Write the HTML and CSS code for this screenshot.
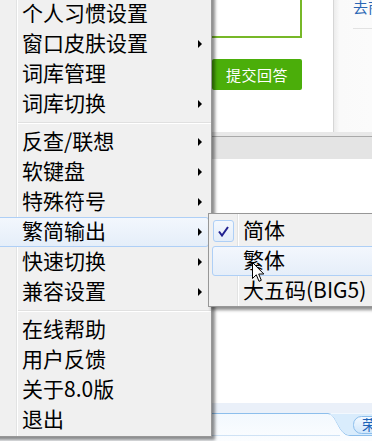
FILE: index.html
```html
<!DOCTYPE html>
<html lang="zh-CN">
<head>
  <meta charset="UTF-8">
  <meta name="viewport" content="width=device-width, initial-scale=1.0">
  <title>输入法菜单</title>
  <link rel="stylesheet" href="styles.css">
</head>
<body>
  <div class="page">
    <!-- page under the menu -->
    <div class="top">
      <div class="main">
        <div class="answer-box"></div>
        <button class="submit">提交回答</button>
      </div>
      <div class="side">
        <a class="side-link">去商城</a>
        <div class="side-rule"></div>
      </div>
    </div>
    <div class="toolbar"></div>
    <div class="content"></div>
    <div class="tabs">
      <svg width="372" height="38" viewBox="0 0 372 38">
        <defs>
          <linearGradient id="pale" x1="0" y1="0" x2="0" y2="1">
            <stop offset="0" stop-color="#f2f8fe"/>
            <stop offset="1" stop-color="#fbfdff"/>
          </linearGradient>
          <linearGradient id="pill" x1="0" y1="0" x2="0" y2="1">
            <stop offset="0" stop-color="#f5faff"/>
            <stop offset="1" stop-color="#cfe6fb"/>
          </linearGradient>
        </defs>
        <rect x="0" y="0" width="372" height="10" fill="#eaf0f9"/>
        <rect x="0" y="10" width="372" height="28" fill="url(#pale)"/>
        <path d="M0 10.5 H328 C337 10.5 338 32.5 350 32.5 H372" fill="none" stroke="#8cbeec" stroke-width="1"/>
        <path d="M328 11 C337 11 338 32 350 32 H372 V11 Z" fill="#d9ecfc"/>
        <line x1="0" y1="32.5" x2="340" y2="32.5" stroke="#cfe2f5"/>
        <rect x="353.5" y="13.5" width="30" height="17" rx="8" fill="url(#pill)" stroke="#8cbeec"/>
        <text x="362" y="27" font-family="Noto Sans CJK SC, sans-serif" font-size="14" fill="#1b62b8">荣</text>
      </svg>
    </div>

    <!-- IME context menu -->
    <ul class="menu main-menu">
      <li class="item">个人习惯设置</li>
      <li class="item sub">窗口皮肤设置</li>
      <li class="item">词库管理</li>
      <li class="item sub">词库切换</li>
      <li class="sep"></li>
      <li class="item sub">反查/联想</li>
      <li class="item sub">软键盘</li>
      <li class="item sub">特殊符号</li>
      <li class="item sub active">繁简输出</li>
      <li class="item sub">快速切换</li>
      <li class="item sub">兼容设置</li>
      <li class="sep"></li>
      <li class="item">在线帮助</li>
      <li class="item">用户反馈</li>
      <li class="item">关于8.0版</li>
      <li class="item">退出</li>
    </ul>

    <ul class="menu sub-menu">
      <li class="item">
        <span class="mark checked">
          <svg width="11" height="11" viewBox="0 0 11 11"><path d="M1 5.5 L4 9.5 L10 1" fill="none" stroke="#21218f" stroke-width="2"/></svg>
        </span>
        <span>简体</span>
      </li>
      <li class="item active"><span class="mark"></span><span>繁体</span></li>
      <li class="item"><span class="mark"></span><span>大五码(BIG5)</span></li>
    </ul>

    <svg class="cursor" width="13" height="21" viewBox="0 0 13 21">
      <path d="M0.5 0.5 V16.5 L4.3 12.8 L7 19.3 L9.3 18.3 L6.7 12 H11.8 Z" fill="#fff" stroke="#000" stroke-width="1" stroke-linejoin="round"/>
    </svg>
  </div>
</body>
</html>
```

FILE: styles.css
```css
body {
  margin: 0;
  font-family: "Noto Sans CJK SC", "Microsoft YaHei", sans-serif;
  background-color: #fff;
}

.page {
  position: relative;
  width: 372px;
  height: 441px;
  overflow: hidden;
  display: flex;
  flex-direction: column;
}

/* page content under the menu */
.top {
  height: 132px;
  display: flex;
}

.main {
  flex: none;
  width: 333px;
  background-color: #fff;
}

.answer-box {
  margin-top: -2px;
  margin-left: 150px;
  width: 148px;
  height: 36px;
  border: 2px solid #77b828;
}

.submit {
  display: block;
  margin-top: 21px;
  margin-left: 212px;
  width: 90px;
  height: 31px;
  border: none;
  border-radius: 2px;
  background-color: #4bae0a;
  color: #fff;
  font-family: inherit;
  font-size: 15px;
  letter-spacing: 0.5px;
  padding: 0;
}

.side {
  flex: 1;
  min-width: 0;
  overflow: hidden;
  border-left: 1px solid #d6d6d6;
  background: linear-gradient(to right, #ececec, #fafafa 6px, #fbfbfb);
  padding-left: 19px;
}

.side-link {
  display: block;
  color: #2a66b4;
  font-size: 15px;
  line-height: 20px;
  margin-top: -3px;
  white-space: nowrap;
}

.side-rule {
  margin-top: 11px;
  border-top: 1px solid #e2e2e2;
}

.toolbar {
  height: 23px;
  background-color: #e4e4e4;
  border-top: 4px solid #e8e8e8;
  border-bottom: 1px solid transparent;
  box-shadow: inset 0 1px 0 #a9a9a9;
  background-clip: padding-box;
}

.content {
  flex: 1;
  background-color: #fff;
}

.tabs {
  height: 38px;
}

.tabs svg {
  display: block;
}

/* menus */
.menu {
  position: absolute;
  margin: 0;
  list-style: none;
  background-color: #f0f0f0;
  border: 1px solid #979797;
  box-shadow: 3px 3px 3px rgba(0, 0, 0, 0.45);
  font-size: 21px;
  color: #000;
}

.main-menu {
  left: -12px;
  top: -10px;
  width: 222px;
  padding: 8px 0 1px;
  background: linear-gradient(to right, #f0f0f0 27px, #e2e3e3 27px, #e2e3e3 28px, #fff 28px, #fff 29px, #f0f0f0 29px);
  background-color: #f0f0f0;
}

.item {
  height: 30px;
  line-height: 24px;
  display: flex;
  align-items: center;
  box-sizing: border-box;
  border: 1px solid transparent;
  border-radius: 3px;
  white-space: nowrap;
}

.main-menu .item {
  margin-right: 2px;
  padding: 0 6px 4px 32px;
}

.main-menu .item.sub::after {
  content: "";
  margin-left: auto;
  margin-top: 4px;
  border-left: 4px solid #000;
  border-top: 4px solid transparent;
  border-bottom: 4px solid transparent;
}

.item.active {
  border-color: #aecff6;
  background: linear-gradient(#f3f7fd, #e5eef9);
}

.sep {
  height: 8px;
  margin-left: 29px;
  background: linear-gradient(#f0f0f0 3px, #e0e0e0 3px, #e0e0e0 4px, #fff 4px, #fff 5px, #f0f0f0 5px);
}

.sub-menu {
  left: 208px;
  top: 213px;
  width: 180px;
  padding: 2px 0 0;
  background: linear-gradient(to right, #f0f0f0 28px, #e2e3e3 28px, #e2e3e3 29px, #fff 29px, #fff 30px, #f0f0f0 30px);
  background-color: #f0f0f0;
}

.sub-menu .item {
  margin-left: 3px;
  padding: 0 0 4px;
}

.mark {
  width: 21px;
  height: 22px;
  margin-right: 9px;
  margin-top: 4px;
  flex: none;
  box-sizing: border-box;
  display: flex;
  align-items: center;
  justify-content: center;
}

.mark.checked {
  border: 1px solid #aecff6;
  border-radius: 3px;
  background: linear-gradient(#f4f8fd, #e3edf9);
}

.cursor {
  position: absolute;
  left: 252px;
  top: 262px;
}
```
